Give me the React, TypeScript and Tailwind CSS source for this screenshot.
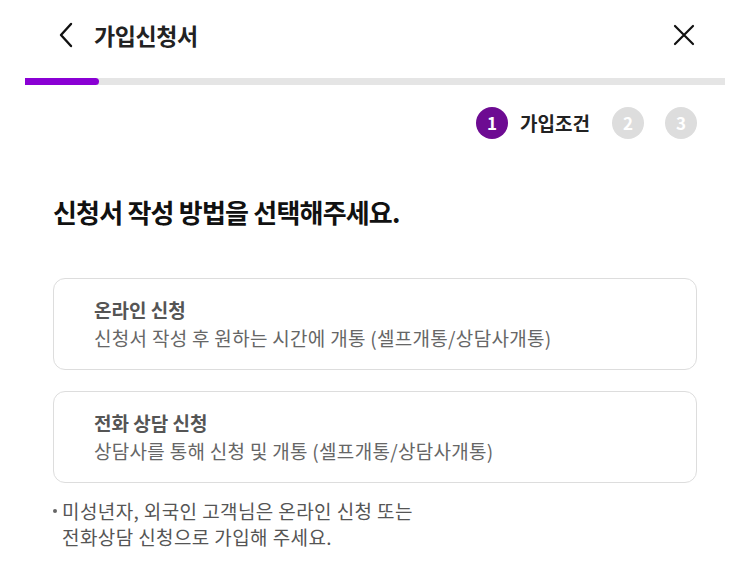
import React from 'react';

const font = { fontFamily: '"Noto Sans CJK KR", "Noto Sans", sans-serif' };

function StepCircle({ n, active }: { n: number; active?: boolean }) {
    return (
        <div
            className={`w-8 h-8 rounded-full flex items-center justify-center text-white text-[17px] font-bold ${active ? 'bg-[#6d0b92]' : 'bg-[#dddddd]'}`}
        >
            {n}
        </div>
    );
}

function OptionCard({ title, desc }: { title: string; desc: string }) {
    return (
        <div className="border border-[#dddddd] rounded-xl h-[92px] pl-10 flex flex-col justify-center">
            <div className="text-[19px] font-bold text-[#555555] leading-[28px]">{title}</div>
            <div className="text-[19px] text-[#666666] leading-[28px] tracking-[0.3px]">{desc}</div>
        </div>
    );
}

export default function App() {
    return (
        <div className="w-[746px] h-[569px] bg-white" style={font}>
            <div className="h-[70px] flex items-center justify-between pl-[56px] pr-[50px]">
                <div className="flex items-center gap-[18px]">
                    <svg width="20" height="26" viewBox="0 0 20 26" fill="none" stroke="#111" strokeWidth="2.4" strokeLinecap="round" strokeLinejoin="round">
                        <path d="M15 2 L5 13 L15 24" />
                    </svg>
                    <span className="text-[23px] font-bold text-[#222222] tracking-[-0.4px]">가입신청서</span>
                </div>
                <svg width="24" height="24" viewBox="0 0 24 24" fill="none" stroke="#111" strokeWidth="2.2" strokeLinecap="round">
                    <path d="M3 3 L21 21 M21 3 L3 21" />
                </svg>
            </div>
            <div className="mt-[8px] ml-[25px] mr-[21px] h-[7px] bg-[#e5e5e5]">
                <div className="w-[74px] h-full bg-[#8a00d4] rounded-r-full" />
            </div>
            <div className="flex items-center justify-end pr-[49px] mt-[22px]">
                <div className="flex items-center gap-[12px]">
                    <StepCircle n={1} active />
                    <span className="text-[19px] font-bold text-[#222222]">가입조건</span>
                </div>
                <div className="flex items-center gap-[21px] ml-[22px]">
                    <StepCircle n={2} />
                    <StepCircle n={3} />
                </div>
            </div>
            <div className="pl-[53px] pr-[49px] mt-[55px]">
                <h1 className="text-[26px] leading-[36px] font-bold text-[#111111] tracking-[-0.8px]">신청서 작성 방법을 선택해주세요.</h1>
                <div className="mt-[48px] flex flex-col gap-[21px]">
                    <OptionCard title="온라인 신청" desc="신청서 작성 후 원하는 시간에 개통 (셀프개통/상담사개통)" />
                    <OptionCard title="전화 상담 신청" desc="상담사를 통해 신청 및 개통 (셀프개통/상담사개통)" />
                </div>
                <div className="mt-[15px] flex text-[19px] text-[#555555] leading-[26px] tracking-[0.4px]">
                    <div className="w-[9px] h-[26px] shrink-0 flex items-center">
                        <span className="block w-[4px] h-[4px] rounded-full bg-[#666666]" />
                    </div>
                    <p>미성년자, 외국인 고객님은 온라인 신청 또는<br />전화상담 신청으로 가입해 주세요.</p>
                </div>
            </div>
        </div>
    );
}
